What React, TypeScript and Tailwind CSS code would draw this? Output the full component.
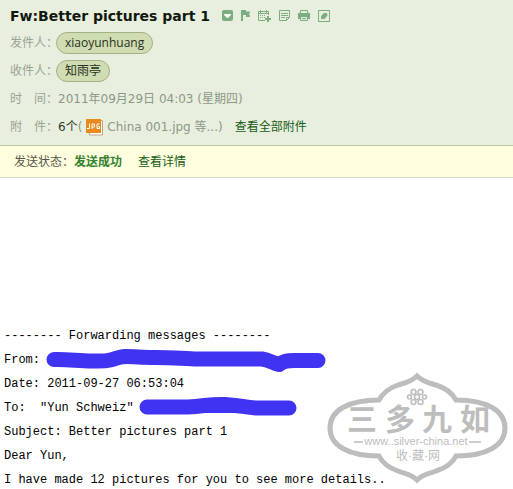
import type { ReactNode } from "react";

function ToolButton({ label, width, children }: { label: string; width: number; children: ReactNode }) {
  return (
    <button type="button" aria-label={label} className="block text-[#7aad80]">
      <svg width={width} height="12" viewBox={`0 0 ${width} 12`} fill="none" stroke="currentColor" className="block">
        {children}
      </svg>
    </button>
  );
}

function Toolbar() {
  return (
    <div className="flex items-center gap-2">
      <ToolButton label="More actions" width={11}>
        <rect width="11" height="11" rx="2" fill="currentColor" stroke="none" />
        <path d="M2 4h7v1L6 8H5L2 5z" fill="#f4faf0" stroke="none" />
      </ToolButton>
      <ToolButton label="Flag" width={9}>
        <path d="M0 0h5v1.500h4.500L8 4l1.500 3H5V5H2v6H0z" fill="currentColor" stroke="none" />
      </ToolButton>
      <ToolButton label="Add to calendar" width={13}>
        <path d="M7 10.500H.5V1.500H10.500V5M0 3.500h11M2.500 0v3M8.500 0v3M2 5.500h1m1 0h1m1 0h1M2 7.500h1m1 0h1m1 0h1" />
        <path d="M10 6v6M7 9h6" strokeWidth="2" />
      </ToolButton>
      <ToolButton label="Note" width={11}>
        <path d="M.5.5h10v7l-3 3h-7zM2 3.500h7M2 5.500h7M2 7.500h4M7.500 10V7.500H10" />
      </ToolButton>
      <ToolButton label="Print" width={12}>
        <path d="M2.500 3V.5h7V3" />
        <path d="M0 3h12v6h-2V7H2v2H0z" fill="currentColor" stroke="none" />
        <path d="M2.500 6.500h7v4h-7zM4 8.500h4" />
      </ToolButton>
      <ToolButton label="Open in new window" width={12}>
        <path d="M.5.5h11v11H.5z" />
        <path d="M3 9V6l3-3h3l.5 2.500L6.500 9z" fill="currentColor" stroke="none" />
      </ToolButton>
    </div>
  );
}

function Row({ label, children }: { label: string; children: ReactNode }) {
  return (
    <div className="flex h-7 items-center">
      <dt className="w-12 shrink-0 whitespace-nowrap text-[#99a394]">{label}</dt>
      <dd className="flex items-center whitespace-nowrap">{children}</dd>
    </div>
  );
}

function Contact({ name }: { name: string }) {
  return (
    <button
      type="button"
      className="-ml-0.5 flex h-[22px] items-center rounded-full border border-[#a3b286] bg-[#d0dcb2] px-2 font-['Open_Sans','Noto_Sans_CJK_SC',sans-serif] leading-5 text-[#26301c]"
    >
      {name}
    </button>
  );
}

function JpgIcon() {
  return (
    <svg width="17" height="17" viewBox="0 0 17 17" className="mx-1 block shrink-0" aria-hidden="true">
      <path d="M1.500 1.500h15v14.500h-13z" fill="#fff" stroke="#b5a78c" />
      <rect width="15" height="14" fill="#e88a1c" />
      <path
        d="M3.500 4.500v5H1M6 10V5h2.500v3H6M13.500 5h-2.500v4.500h2.500V7.500H12"
        fill="none"
        stroke="#fff"
      />
    </svg>
  );
}

function FromStroke() {
  return (
    <svg width="280" height="24" viewBox="46 348 280 24" className="block overflow-visible" aria-label="Hidden address" role="img">
      <path
        d="M54 359.500C68 359 78 361 92 361S109 361 117 358 129 357 150 357.500C172 357 184 359 198 359H262C269 360 273 363 279 364.500 283 361 287 360.500 294 360.500H318"
        fill="none"
        stroke="#4034f2"
        strokeWidth="15"
        strokeLinecap="round"
        strokeLinejoin="round"
      />
    </svg>
  );
}

function ToStroke() {
  return (
    <svg width="160" height="24" viewBox="138 396 160 24" className="block overflow-visible" aria-label="Hidden address" role="img">
      <path
        d="M147 407H188C205 406 211 404 224 404.500S244 407 256 408H289"
        fill="none"
        stroke="#4034f2"
        strokeWidth="15"
        strokeLinecap="round"
        strokeLinejoin="round"
      />
      <path d="M190 408H250" stroke="#4034f2" strokeWidth="10" />
    </svg>
  );
}

function Watermark() {
  return (
    <svg
      width="182"
      height="112"
      viewBox="327 373 182 112"
      className="pointer-events-none absolute right-1 bottom-2"
      role="img"
      aria-label="三多九如 www.silver-china.net 收藏网"
    >
      <path
        d="M417 377C411 383 405 384 398 386 389 389 383 394 379 401 349 401 330 411 330 429S349 457 379 457C383 465 389 469 398 472 405 475 411 475 417 481 423 475 429 475 436 472 446 469 452 465 456 457 486 457 505 447 505 429S486 401 456 401C452 394 446 389 436 386 429 384 423 383 417 377Z"
        fill="none"
        stroke="#bdbdbd"
        strokeWidth="5"
      />
      <g fill="none" stroke="#bdbdbd" strokeWidth="1.500">
        <circle cx="413.500" cy="393" r="2.500" />
        <circle cx="420.500" cy="393" r="2.500" />
        <circle cx="417" cy="398" r="2.500" />
        <circle cx="409.500" cy="398" r="2" />
        <circle cx="424.500" cy="398" r="2" />
        <circle cx="413.500" cy="403" r="2.500" />
        <circle cx="420.500" cy="403" r="2.500" />
      </g>
      <path d="M354 443h9M469 443h12" stroke="#bdbdbd" strokeWidth="1.500" />
      <g fill="#bdbdbd" textAnchor="middle" className="font-['Liberation_Sans','Noto_Sans_CJK_SC',sans-serif]">
        <g className="text-[30px] font-bold">
          <text x="362" y="431">三</text>
          <text x="400" y="431">多</text>
          <text x="437" y="431">九</text>
          <text x="475" y="431">如</text>
        </g>
        <text x="416" y="446" className="text-[11px]">www..silver-china.net</text>
        <text x="418" y="461" className="text-[12px]">收·藏·网</text>
      </g>
    </svg>
  );
}

export default function App() {
  return (
    <main className="relative min-h-screen bg-white font-['DejaVu_Sans','Noto_Sans_CJK_SC',sans-serif] text-xs">
      <header className="border-b border-[#c0c59c] bg-[#e8efde] px-2.5 pb-1">
        <div className="flex h-[29px] items-center gap-3 pt-0.5">
          <h1 className="whitespace-nowrap text-sm font-bold text-[#11180e]">Fw:Better pictures part 1</h1>
          <Toolbar />
        </div>
        <dl>
          <Row label="发件人：">
            <Contact name="xiaoyunhuang" />
          </Row>
          <Row label="收件人：">
            <Contact name="知雨亭" />
          </Row>
          <Row label="时　间：">
            <span className="text-[#8d9788]">2011年09月29日 04:03 (星期四)</span>
          </Row>
          <Row label="附　件：">
            <span className="text-[#303a2a]">6个</span>
            <span className="text-[#8d9788]">(</span>
            <JpgIcon />
            <span className="text-[#8d9788]">China 001.jpg 等...)</span>
            <a href="#attachments" className="ml-3 text-[#175c17]">
              查看全部附件
            </a>
          </Row>
        </dl>
      </header>
      <section className="flex h-8 items-center whitespace-nowrap border-b border-[#d8dacb] bg-[#ffffe0] px-3.5 text-[#55564a]">
        <span>发送状态：</span>
        <strong className="text-[#348230]">发送成功</strong>
        <a href="#status" className="ml-4 text-[#175c17]">
          查看详情
        </a>
      </section>
      <article className="px-1 pt-[146px] font-['Liberation_Mono',monospace] leading-6 whitespace-pre text-black">
        <p>-------- Forwarding messages --------</p>
        <div className="flex">
          <span>From:</span>
          <span className="ml-1.5">
            <FromStroke />
          </span>
        </div>
        <p>Date: 2011-09-27 06:53:04</p>
        <div className="flex">
          <span>To:  "Yun Schweiz"</span>
          <span className="ml-1">
            <ToStroke />
          </span>
        </div>
        <p>Subject: Better pictures part 1</p>
        <p>Dear Yun,</p>
        <p>I have made 12 pictures for you to see more details..</p>
      </article>
      <Watermark />
    </main>
  );
}
